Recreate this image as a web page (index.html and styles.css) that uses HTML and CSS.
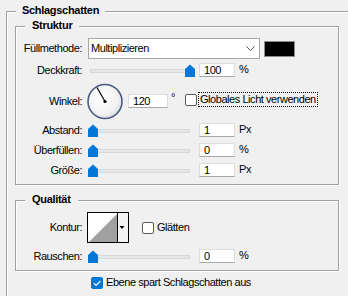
FILE: index.html
```html
<!DOCTYPE html>
<html lang="de">
<head>
<meta charset="utf-8">
<title>Schlagschatten</title>
<link rel="stylesheet" href="styles.css">
</head>
<body>
<div class="group outer">
  <div class="title">Schlagschatten</div>

  <div class="group inner struktur">
    <div class="title">Struktur</div>

    <div class="row r-first">
      <span class="lbl">Füllmethode:</span>
      <div class="select">
        <span>Multiplizieren</span>
        <svg class="chev" width="9" height="5" viewBox="0 0 9 5"><path d="M0.5 0.5 L4.5 4.5 L8.5 0.5" fill="none" stroke="#555" stroke-width="1"/></svg>
      </div>
      <div class="swatch"></div>
    </div>

    <div class="row r-opacity">
      <span class="lbl">Deckkraft:</span>
      <div class="slider"><div class="track"></div><svg class="thumb" style="left:97px" width="10" height="13" viewBox="0 0 10 13"><path d="M0 5 L5 0.5 L10 5 V13 H0 Z" fill="#0078d7"/></svg></div>
      <div class="num">100</div>
      <span class="unit">%</span>
    </div>

    <div class="row r-angle">
      <span class="lbl">Winkel:</span>
      <svg class="dial" width="36" height="37" viewBox="0 0 36 37">
        <defs>
          <radialGradient id="dg" cx="0.42" cy="0.4" r="0.65">
            <stop offset="0" stop-color="#ffffff"/>
            <stop offset="0.7" stop-color="#f2f2f2"/>
            <stop offset="1" stop-color="#d8d8d8"/>
          </radialGradient>
        </defs>
        <circle cx="18" cy="18.5" r="17" fill="url(#dg)" stroke="#4a5b82" stroke-width="1.6"/>
        <line x1="18" y1="18.5" x2="10" y2="4.5" stroke="#000" stroke-width="1.2"/>
        <circle cx="18" cy="18.5" r="1.6" fill="#000"/>
      </svg>
      <div class="num wide">120</div>
      <span class="deg">°</span>
      <span class="check"></span>
      <span class="focus">Globales Licht verwenden</span>
    </div>

    <div class="row r-slider r-gap3">
      <span class="lbl">Abstand:</span>
      <div class="slider"><div class="track"></div><svg class="thumb" style="left:0px" width="10" height="13" viewBox="0 0 10 13"><path d="M0 5 L5 0.5 L10 5 V13 H0 Z" fill="#0078d7"/></svg></div>
      <div class="num">1</div>
      <span class="unit">Px</span>
    </div>

    <div class="row r-slider">
      <span class="lbl">Überfüllen:</span>
      <div class="slider"><div class="track"></div><svg class="thumb" style="left:0px" width="10" height="13" viewBox="0 0 10 13"><path d="M0 5 L5 0.5 L10 5 V13 H0 Z" fill="#0078d7"/></svg></div>
      <div class="num">0</div>
      <span class="unit">%</span>
    </div>

    <div class="row r-slider">
      <span class="lbl">Größe:</span>
      <div class="slider"><div class="track"></div><svg class="thumb" style="left:0px" width="10" height="13" viewBox="0 0 10 13"><path d="M0 5 L5 0.5 L10 5 V13 H0 Z" fill="#0078d7"/></svg></div>
      <div class="num">1</div>
      <span class="unit">Px</span>
    </div>
  </div>

  <div class="group inner qualitaet">
    <div class="title">Qualität</div>

    <div class="row r-contour">
      <span class="lbl">Kontur:</span>
      <svg class="contour" width="42" height="31" viewBox="0 0 42 31">
        <rect x="0.5" y="0.5" width="41" height="30" fill="#f4f4f4" stroke="#000"/>
        <rect x="1" y="1" width="29.5" height="29" fill="#fff"/>
        <polygon points="2,30 30,2 30,30" fill="#a0a0a0"/>
        <line x1="30.5" y1="0" x2="30.5" y2="31" stroke="#000"/>
        <polygon points="32.5,14 37.5,14 35,17" fill="#000"/>
      </svg>
      <span class="check gl"></span>
      <span class="cklbl">Glätten</span>
    </div>

    <div class="row r-slider r-gap6">
      <span class="lbl">Rauschen:</span>
      <div class="slider"><div class="track"></div><svg class="thumb" style="left:0px" width="10" height="13" viewBox="0 0 10 13"><path d="M0 5 L5 0.5 L10 5 V13 H0 Z" fill="#0078d7"/></svg></div>
      <div class="num">0</div>
      <span class="unit">%</span>
    </div>
  </div>

  <div class="row r-bottom">
    <span class="check on"><svg width="10" height="10" viewBox="0 0 10 10"><path d="M1.8 5.2 L4 7.4 L8.4 2.8" fill="none" stroke="#fff" stroke-width="1.2"/></svg></span>
    <span class="cklbl">Ebene spart Schlagschatten aus</span>
  </div>
</div>
</body>
</html>
```

FILE: styles.css
```css
* { box-sizing: border-box; }

html, body {
  margin: 0;
  padding: 0;
  background: #f0f0f0;
}

body {
  width: 348px;
  height: 296px;
  overflow: hidden;
  font-family: "Liberation Sans", Arial, sans-serif;
  font-size: 11px;
  line-height: 13px;
  letter-spacing: -0.45px;
  color: #000;
}

.group {
  position: relative;
  border: 1px solid #a0a0a0;
  box-shadow: inset 1px 1px 0 #fff, 1px 1px 0 #fff;
}

.title {
  position: absolute;
  top: -8px;
  left: 9px;
  padding: 0 6px;
  background: #f0f0f0;
  font-weight: bold;
  letter-spacing: -0.3px;
  white-space: nowrap;
}

/* outer group: its right and bottom edges lie outside the dialog crop */
.outer {
  margin: 11px 0 0 6px;
  width: 342px;
  height: 285px;
  padding: 14px 0 0 8px;
  border-right: 0;
  border-bottom: 0;
  box-shadow: inset 1px 1px 0 #fff;
}

.inner {
  width: 324px;
  padding: 11px 0 7px;
}

.inner .title {
  padding: 0 7px;
}

.qualitaet {
  margin-top: 15px;
}

.row {
  display: flex;
  align-items: center;
  white-space: nowrap;
}

.lbl {
  flex: none;
  width: 66px;
  text-align: right;
}

/* Füllmethode */
.r-first { height: 21px; }

.select {
  flex: none;
  display: flex;
  align-items: center;
  justify-content: space-between;
  width: 172px;
  height: 21px;
  margin-left: 6px;
  padding: 0 4px 0 2px;
  background: #fff;
  border: 1px solid #a6a6a6;
}

.chev { display: block; }

.swatch {
  flex: none;
  width: 31px;
  height: 16px;
  margin-left: 4px;
  background: #000;
  border: 1px solid #8c8c8c;
}

/* sliders */
.r-opacity { height: 14px; margin-top: 4px; }
.r-slider { height: 14px; margin-top: 6px; }
.r-gap3 { margin-top: 3px; }

.slider {
  flex: none;
  position: relative;
  width: 106px;
  height: 13px;
  margin-left: 6px;
}

.track {
  height: 4px;
  margin: 5px 4px 0 2px;
  background: #e7e7e7;
  border: 1px solid #d8d8d8;
}

.thumb {
  position: absolute;
  top: 0;
  display: block;
}

.num {
  flex: none;
  width: 36px;
  height: 14px;
  margin-left: 5px;
  padding-left: 4px;
  line-height: 12px;
  background: #fff;
  border: 1px solid #dcdcdc;
  border-bottom-color: #a8a8a8;
}

.num.wide {
  width: 40px;
  margin-left: 5px;
}

.unit {
  margin-left: 4px;
  align-self: flex-start;
}

/* Winkel */
.r-angle {
  height: 38px;
  margin-top: 5px;
}

.dial {
  flex: none;
  display: block;
  margin-left: 5px;
}

.deg {
  flex: none;
  width: 14px;
  margin-left: 3px;
  align-self: flex-start;
  margin-top: 9px;
}

.check {
  flex: none;
  display: flex;
  align-items: center;
  justify-content: center;
  width: 12px;
  height: 12px;
  background: #fff;
  border: 1px solid #5a5a5a;
  border-radius: 2px;
}

.check.on {
  background: #0078d7;
  border-color: #0078d7;
}

.r-angle .check { margin-bottom: 3px; }

.focus {
  margin-left: 1px;
  margin-bottom: 3px;
  padding: 0 1px;
  border: 1px dotted #000;
}

/* Qualität */
.r-contour { height: 31px; }

.contour {
  flex: none;
  display: block;
  margin-left: 5px;
}

.check.gl { margin-left: 13px; }

.cklbl { margin-left: 3px; }

.r-gap6 { margin-top: 6px; }

.r-bottom {
  height: 13px;
  margin-top: 5px;
  padding-left: 76px;
}
```
